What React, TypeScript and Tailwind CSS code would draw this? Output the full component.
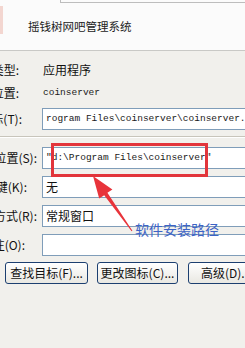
const cjk = "font-['Noto_Sans_CJK_SC',sans-serif]";
const mono = "font-['Liberation_Mono','Noto_Sans_CJK_SC',monospace]";

type FieldRow = {
  label: string;
  pr: string;
  value: string;
  isMono?: boolean;
};

const FieldInput = ({ value, isMono }: { value: string; isMono?: boolean }) => (
  <div className="h-[22px] w-[230px] shrink-0 border border-[#7f9db9] bg-white flex items-center pl-[3px] whitespace-nowrap overflow-hidden">
    <span className={isMono ? `${mono} text-[9.5px] text-[#1a1a1a]` : `${cjk} text-[12px] text-[#111]`}>
      {value}
    </span>
  </div>
);

const Label = ({ text, pr }: { text: string; pr: string }) => (
  <div className={`w-[42px] shrink-0 flex justify-end overflow-hidden whitespace-nowrap ${pr}`}>
    <span className={`${cjk} text-[12px] text-[#111]`}>{text}</span>
  </div>
);

const lowerRows: FieldRow[] = [
  { label: "起始位置(S):", pr: "pr-[5px]", value: '"d:\\Program Files\\coinserver"', isMono: true },
  { label: "快捷键(K):", pr: "pr-[15px]", value: "无" },
  { label: "运行方式(R):", pr: "pr-[5px]", value: "常规窗口" },
  { label: "备注(O):", pr: "pr-[17px]", value: "" },
];

const buttons = [
  { text: "查找目标(F)...", cls: "ml-[5px] w-[83px]" },
  { text: "更改图标(C)...", cls: "ml-[9px] w-[81px]" },
  { text: "高级(D)...", cls: "ml-[10px] w-[80px] justify-start pl-[12px]" },
];

const App = () => {
  return (
    <div className="relative w-[245px] h-[348px] overflow-hidden bg-[#f1f0ec]">
      {/* header */}
      <div className="relative h-[51px] bg-[#fbfbfb] border-b border-[#c9c9c6]">
        <div className="ml-[60px] h-[3px] border-l border-b border-[#bdbdbd]" />
        <div className="absolute left-0 top-[6px] w-[3px] h-[28px] bg-[#f3d6d0]" />
        <p className={`${cjk} pl-[28px] pt-[15px] text-[11.5px] leading-[16px] text-[#222]`}>
          摇钱树网吧管理系统
        </p>
      </div>

      {/* info rows */}
      <div className="flex flex-col">
        <div className="mt-[11px] h-[16px] flex items-center">
          <Label text="目标类型:" pr="pr-[23px]" />
          <span className={`${cjk} ml-[1px] text-[12px] text-[#111]`}>应用程序</span>
        </div>
        <div className="mt-[7px] h-[16px] flex items-center">
          <Label text="目标位置:" pr="pr-[23px]" />
          <span className={`${mono} ml-[1px] text-[9.5px] text-[#1a1a1a]`}>coinserver</span>
        </div>
        <div className="mt-[7px] flex items-center">
          <Label text="目标(T):" pr="pr-[20px]" />
          <FieldInput value={"rogram Files\\coinserver\\coinserver.exe\""} isMono />
        </div>

        <div className="mt-[6px] border-t border-[#c8c5bb] border-b border-b-white" />

        <div className="mt-[9px] flex flex-col gap-[7px]">
          {lowerRows.map((row) => (
            <div key={row.label} className="flex items-center">
              <Label text={row.label} pr={row.pr} />
              <FieldInput value={row.value} isMono={row.isMono} />
            </div>
          ))}
        </div>

        <div className="mt-[6px] flex items-center">
          {buttons.map((b) => (
            <div
              key={b.text}
              className={`${b.cls} ${cjk} h-[22px] shrink-0 flex items-center justify-center rounded-[3px] border border-[#1c3f70] bg-linear-to-b from-white to-[#e9e8e2] text-[12px] text-[#111] whitespace-nowrap`}
            >
              {b.text}
            </div>
          ))}
        </div>
      </div>

      {/* annotation overlay */}
      <div className="absolute left-[51px] top-[143px] w-[157px] h-[34px] border-[3px] border-[#e2353b]" />
      <svg className="absolute left-0 top-0" width="245" height="348" viewBox="0 0 245 348">
        <polygon
          points="93,176 112.4,189.4 107.4,192.8 132.4,230.7 131.6,231.3 104.2,195.2 99.2,198.6"
          fill="#e8343b"
        />
      </svg>
      <span className={`${cjk} absolute left-[135px] top-[220px] text-[14px] leading-[18px] text-[#3d63c6]`}>
        软件安装路径
      </span>
    </div>
  );
};

export default App;
